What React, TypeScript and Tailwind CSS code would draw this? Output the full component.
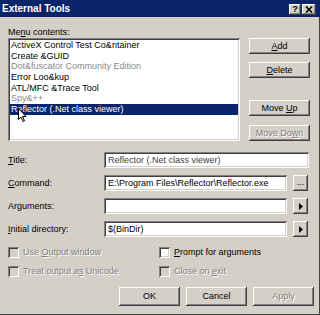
import React from "react";

const raised =
  "bg-[#d4d0c8] shadow-[inset_-1px_-1px_0_#404040,inset_1px_1px_0_#ffffff,inset_-2px_-2px_0_#808080]";
const sunken =
  "shadow-[inset_1px_1px_0_#808080,inset_-1px_-1px_0_#ffffff,inset_2px_2px_0_#404040,inset_-2px_-2px_0_#d4d0c8]";
const disabledText = "text-[#808080] [text-shadow:1px_1px_0_#ffffff]";

// mnemonic letter, underlined
function M({ children }: { children: React.ReactNode }) {
  return <span className="underline decoration-1 underline-offset-[1px]">{children}</span>;
}

function Button({
  children,
  disabled,
  className = "",
}: {
  children: React.ReactNode;
  disabled?: boolean;
  className?: string;
}) {
  return (
    <div
      className={`${raised} flex items-center justify-center ${disabled ? disabledText : "text-black"} ${className}`}
    >
      <span className="whitespace-pre">{children}</span>
    </div>
  );
}

function Arrow() {
  return (
    <svg width="4" height="7" viewBox="0 0 4 7" className="block">
      <path d="M0 0 L4 3.5 L0 7 Z" fill="#000" />
    </svg>
  );
}

function Field({
  label,
  value,
  side,
  wide,
}: {
  label: React.ReactNode;
  value: string;
  side?: React.ReactNode;
  wide?: boolean;
}) {
  return (
    <div className="flex items-center h-[16px]">
      <div className="w-[96px]">{label}</div>
      <div
        className={`${sunken} bg-white h-[16px] ${wide ? "w-[205px]" : "w-[183px]"} flex items-center pl-[4px] ${
          wide ? "text-[#404040]" : "text-black"
        }`}
      >
        {value}
      </div>
      {side && <Button className="ml-[6px] w-[15px] h-[16px]">{side}</Button>}
    </div>
  );
}

function Check({
  label,
  disabled,
}: {
  label: React.ReactNode;
  disabled?: boolean;
}) {
  return (
    <div className="flex items-center h-[11px]">
      <div className={`${sunken} w-[11px] h-[11px] ${disabled ? "bg-[#d4d0c8]" : "bg-white"}`} />
      <span className={`ml-[4px] ${disabled ? disabledText : "text-black"}`}>{label}</span>
    </div>
  );
}

const items = [
  { t: "ActiveX Control Test Co&ntainer" },
  { t: "Create &GUID" },
  { t: "Dot&fuscator Community Edition", g: true },
  { t: "Error Loo&kup" },
  { t: "ATL/MFC &Trace Tool" },
  { t: "Spy&++", g: true },
  { t: "Reflector (.Net class viewer)", sel: true },
];

export default function App() {
  return (
    <div
      className="relative w-[320px] h-[315px] overflow-hidden bg-[#d4d0c8] text-[9px] leading-[11px] text-black shadow-[inset_-1px_-1px_0_#404040]"
      style={{ fontFamily: '"Liberation Sans", Arial, sans-serif' }}
    >
      {/* Title bar */}
      <div className="h-[17px] bg-[#0a246a] flex items-center pl-[2px] pr-[4px]">
        <span className="text-white font-bold text-[10px] leading-[12px]">External Tools</span>
        <div className="ml-auto flex gap-[1px] mt-[1px]">
          <div className={`${raised} w-[12px] h-[11px] flex items-center justify-center font-bold text-[9px] leading-none`}>
            ?
          </div>
          <div className={`${raised} w-[14px] h-[11px] flex items-center justify-center`}>
            <svg width="8" height="7" viewBox="0 0 8 7">
              <path d="M1 0.5 L7 6.5 M7 0.5 L1 6.5" stroke="#000" strokeWidth="1.6" />
            </svg>
          </div>
        </div>
      </div>

      <div className="pl-[8px]">
        <div className="mt-[10px] h-[11px]">
          Me<M>n</M>u contents:
        </div>

        {/* list + side buttons */}
        <div className="flex">
          <div className={`${sunken} bg-white w-[232px] h-[103px] pt-[2px] px-[2px]`}>
            {items.map((it) => (
              <div
                key={it.t}
                className={`h-[10.7px] leading-[10.7px] pl-[1px] whitespace-nowrap ${
                  it.sel ? "bg-[#0a246a] text-white" : it.g ? "text-[#8a8a8a]" : "text-black"
                }`}
              >
                {it.t}
              </div>
            ))}
          </div>
          <div className="ml-[9px] flex flex-col">
            <Button className="w-[61px] h-[16px]">
              <M>A</M>dd
            </Button>
            <Button className="w-[61px] h-[16px] mt-[8px]">
              <M>D</M>elete
            </Button>
            <Button className="w-[61px] h-[16px] mt-[22px]">
              Move <M>U</M>p
            </Button>
            <Button disabled className="w-[61px] h-[16px] mt-[9px]">
              Move Do<M>w</M>n
            </Button>
          </div>
        </div>

        {/* fields */}
        <div className="mt-[11px] flex flex-col gap-[7px]">
          <Field label={<><M>T</M>itle:</>} value="Reflector (.Net class viewer)" wide />
          <Field
            label={<><M>C</M>ommand:</>}
            value="E:\Program Files\Reflector\Reflector.exe"
            side={<span className="leading-none relative top-[-1px]">...</span>}
          />
          <Field label={<>Ar<M>g</M>uments:</>} value="" side={<Arrow />} />
          <Field label={<><M>I</M>nitial directory:</>} value="$(BinDir)" side={<Arrow />} />
        </div>

        {/* checkboxes */}
        <div className="mt-[10px] grid grid-cols-[151px_1fr] gap-y-[8px]">
          <Check disabled label={<>Use <M>O</M>utput window</>} />
          <Check label={<><M>P</M>rompt for arguments</>} />
          <Check disabled label={<>Treat output a<M>s</M> Unicode</>} />
          <Check disabled label={<>Close on <M>e</M>xit</>} />
        </div>

        {/* dialog buttons */}
        <div className="mt-[10px] ml-[111px] flex gap-[6px]">
          <Button className="w-[61px] h-[19px] shadow-[inset_-1px_-1px_0_#000000,inset_1px_1px_0_#ffffff,inset_-2px_-2px_0_#808080]">
            OK
          </Button>
          <Button className="w-[61px] h-[19px]">Cancel</Button>
          <Button disabled className="w-[61px] h-[19px]">
            Apply
          </Button>
        </div>
      </div>

      {/* mouse cursor over the selected item */}
      <svg className="absolute left-[18px] top-[108px]" width="9" height="15" viewBox="0 0 9 15">
        <path
          d="M0.5 0.5 L0.5 11.5 L3 9 L5 13.5 L6.5 12.8 L4.6 8.5 L8 8.5 Z"
          fill="#ffffff"
          stroke="#000000"
          strokeWidth="1"
          strokeLinejoin="round"
        />
      </svg>
    </div>
  );
}
